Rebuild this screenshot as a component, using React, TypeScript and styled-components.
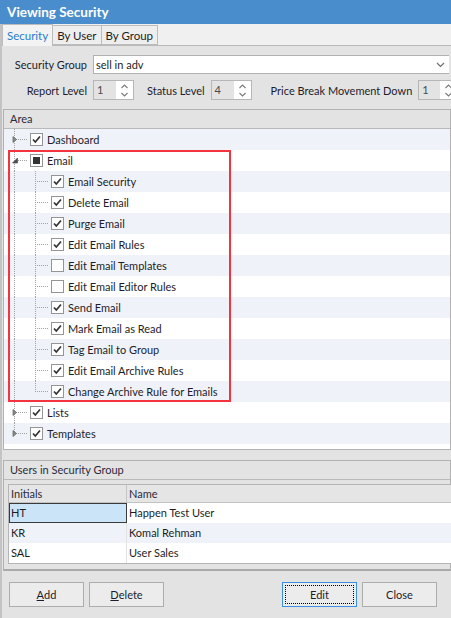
import React from "react";
import styled, { createGlobalStyle } from "styled-components";

const GlobalStyle = createGlobalStyle`
  html, body {
    margin: 0;
    padding: 0;
    background: #e3e3e3;
  }
  body {
    font-family: "Lato", "Liberation Sans", sans-serif;
    font-size: 11px;
    color: #1e1e1e;
  }
`;

type TreeItem = {
  label: string;
  level: 0 | 1;
  checked: boolean | "mixed";
  expander?: "closed" | "open";
  guides: Array<"pass" | "tee" | "end">;
};

const treeItems: TreeItem[] = [
  { label: "Dashboard", level: 0, checked: true, expander: "closed", guides: ["tee"] },
  { label: "Email", level: 0, checked: "mixed", expander: "open", guides: ["tee"] },
  { label: "Email Security", level: 1, checked: true, guides: ["pass", "tee"] },
  { label: "Delete Email", level: 1, checked: true, guides: ["pass", "tee"] },
  { label: "Purge Email", level: 1, checked: true, guides: ["pass", "tee"] },
  { label: "Edit Email Rules", level: 1, checked: true, guides: ["pass", "tee"] },
  { label: "Edit Email Templates", level: 1, checked: false, guides: ["pass", "tee"] },
  { label: "Edit Email Editor Rules", level: 1, checked: false, guides: ["pass", "tee"] },
  { label: "Send Email", level: 1, checked: true, guides: ["pass", "tee"] },
  { label: "Mark Email as Read", level: 1, checked: true, guides: ["pass", "tee"] },
  { label: "Tag Email to Group", level: 1, checked: true, guides: ["pass", "tee"] },
  { label: "Edit Email Archive Rules", level: 1, checked: true, guides: ["pass", "tee"] },
  { label: "Change Archive Rule for Emails", level: 1, checked: true, guides: ["pass", "end"] },
  { label: "Lists", level: 0, checked: true, expander: "closed", guides: ["tee"] },
  { label: "Templates", level: 0, checked: true, expander: "closed", guides: ["end"] },
];

const users = [
  { initials: "HT", name: "Happen Test User" },
  { initials: "KR", name: "Komal Rehman" },
  { initials: "SAL", name: "User Sales" },
];

function SpinArrows() {
  return (
    <SpinButtons>
      <svg width="7" height="5" viewBox="0 0 7 5">
        <path d="M0.5 4 L3.5 1 L6.5 4" fill="none" stroke="#7a7a7a" strokeWidth="1.1" />
      </svg>
      <svg width="7" height="5" viewBox="0 0 7 5">
        <path d="M0.5 1 L3.5 4 L6.5 1" fill="none" stroke="#7a7a7a" strokeWidth="1.1" />
      </svg>
    </SpinButtons>
  );
}

function Spinner({ value, width }: { value: string; width: number }) {
  return (
    <SpinBox $width={width}>
      <SpinValue>{value}</SpinValue>
      <SpinArrows />
    </SpinBox>
  );
}

function CheckBox({ state }: { state: boolean | "mixed" }) {
  return (
    <Check>
      {state === true && (
        <svg width="11" height="11" viewBox="0 0 11 11">
          <path d="M2 5.5 L4.3 8 L9 2.5" fill="none" stroke="#333" strokeWidth="1.7" />
        </svg>
      )}
      {state === "mixed" && <MixedMark />}
    </Check>
  );
}

function Expander({ kind }: { kind: "closed" | "open" }) {
  return (
    <ExpanderIcon width="8" height="9" viewBox="0 0 8 9">
      {kind === "closed" ? (
        <path d="M2 1.5 L5.5 4.5 L2 7.5 Z" fill="#8a8a8a" stroke="#6a6a6a" strokeWidth="0.8" />
      ) : (
        <path d="M6.5 2 L6.5 7 L1.5 7 Z" fill="#505050" stroke="#404040" strokeWidth="0.6" />
      )}
    </ExpanderIcon>
  );
}

export default function App() {
  return (
    <Window>
      <GlobalStyle />
      <TitleBar>Viewing Security</TitleBar>
      <Body>
        <TabStrip>
          <Tab $active>Security</Tab>
          <Tab>By User</Tab>
          <Tab>By Group</Tab>
        </TabStrip>

        <Form>
          <FieldRow>
            <Label $width={85}>Security Group</Label>
            <ComboBox>
              <span>sell in adv</span>
              <svg width="9" height="6" viewBox="0 0 9 6">
                <path d="M1 1 L4.5 4.5 L8 1" fill="none" stroke="#6d6d6d" strokeWidth="1.2" />
              </svg>
            </ComboBox>
          </FieldRow>
          <FieldRow>
            <Label $width={85}>Report Level</Label>
            <Spinner value="1" width={41} />
            <Label $gapLeft={13}>Status Level</Label>
            <Spinner value="4" width={41} />
            <Label $gapLeft={19}>Price Break Movement Down</Label>
            <Spinner value="1" width={40} />
          </FieldRow>
        </Form>

        <AreaPanel>
          <PanelHeader>Area</PanelHeader>
          <Tree>
            {treeItems.map((item, i) => (
              <TreeRow key={item.label + i} $alt={i % 2 === 0}>
                {item.guides.map((g, j) => (
                  <Guide key={j} $mode={g}>
                    {j === 0 && item.expander && <Expander kind={item.expander} />}
                  </Guide>
                ))}
                <CheckBox state={item.checked} />
                <TreeLabel>{item.label}</TreeLabel>
              </TreeRow>
            ))}
            <Highlight />
          </Tree>
        </AreaPanel>

        <UsersPanel>
          <PanelHeader>Users in Security Group</PanelHeader>
          <GridWrap>
            <Grid>
              <GridHead>
                <HeadCell $width={115}>Initials</HeadCell>
                <HeadCell>Name</HeadCell>
              </GridHead>
              {users.map((u, i) => (
                <GridRow key={u.initials} $alt={i % 2 === 1}>
                  <Cell $width={115} $selected={i === 0}>
                    {u.initials}
                  </Cell>
                  <Cell>{u.name}</Cell>
                </GridRow>
              ))}
            </Grid>
          </GridWrap>
        </UsersPanel>

        <ButtonBar>
          <ButtonGroup>
            <Button>
              <u>A</u>dd
            </Button>
            <Button>
              <u>D</u>elete
            </Button>
          </ButtonGroup>
          <ButtonGroup>
            <Button $focused>
              <FocusRect>Edit</FocusRect>
            </Button>
            <Button>Close</Button>
          </ButtonGroup>
        </ButtonBar>
      </Body>
    </Window>
  );
}

const Window = styled.div`
  width: 451px;
  height: 618px;
  overflow: hidden;
  display: flex;
  flex-direction: column;
  background: #e3e3e3;
`;

const TitleBar = styled.div`
  height: 24px;
  flex: none;
  background: #4a8dcc;
  color: #ffffff;
  font-weight: bold;
  font-size: 13.5px;
  line-height: 24px;
  padding-left: 7px;
`;

const Body = styled.div`
  flex: 1;
  display: flex;
  flex-direction: column;
  border-left: 2px solid #c3c3c3;
  min-height: 0;
`;

const TabStrip = styled.div`
  height: 22px;
  flex: none;
  box-sizing: border-box;
  display: flex;
  align-items: flex-end;
  background: #f0f0f0;
  border-bottom: 1px solid #b9b9b9;
`;

const Tab = styled.div<{ $active?: boolean }>`
  height: ${(p) => (p.$active ? 22 : 20)}px;
  box-sizing: border-box;
  padding: 0 4px;
  margin-bottom: ${(p) => (p.$active ? -1 : 0)}px;
  margin-left: ${(p) => (p.$active ? 0 : -1)}px;
  display: flex;
  align-items: center;
  border: 1px solid #bcbcbc;
  border-bottom: ${(p) => (p.$active ? "none" : "1px solid #bcbcbc")};
  background: ${(p) => (p.$active ? "#f3f3f3" : "#eeeeee")};
  color: ${(p) => (p.$active ? "#2a7dcf" : "#1e1e1e")};
  font-size: 11.5px;
  &:first-child {
    margin-left: 0;
  }
`;

const Form = styled.div`
  height: 63px;
  flex: none;
  box-sizing: border-box;
  padding-top: 8px;
  display: flex;
  flex-direction: column;
  gap: 6px;
`;

const FieldRow = styled.div`
  display: flex;
  align-items: center;
  height: 20px;
`;

const Label = styled.div<{ $width?: number; $gapLeft?: number }>`
  ${(p) => (p.$width ? `width: ${p.$width}px; text-align: right;` : "")}
  margin-left: ${(p) => p.$gapLeft ?? 0}px;
  margin-right: 6px;
  white-space: nowrap;
  flex: none;
  font-size: 11px;
  color: #1d1d2b;
`;

const ComboBox = styled.div`
  flex: none;
  width: 356px;
  height: 19px;
  box-sizing: border-box;
  background: #ffffff;
  border: 1px solid #b1b1b1;
  border-right: none;
  display: flex;
  align-items: center;
  justify-content: space-between;
  padding: 0 4px 0 2px;
  font-size: 11px;
  svg {
    margin-top: 1px;
  }
`;

const SpinBox = styled.div<{ $width: number }>`
  flex: none;
  width: ${(p) => p.$width}px;
  height: 20px;
  box-sizing: border-box;
  border: 1px solid #b6b6b6;
  background: #e3e3e3;
  display: flex;
`;

const SpinValue = styled.div`
  flex: 1;
  padding-left: 3px;
  line-height: 18px;
  color: #4a4a4a;
  font-size: 11px;
`;

const SpinButtons = styled.div`
  width: 17px;
  background: #ffffff;
  display: flex;
  flex-direction: column;
  align-items: center;
  justify-content: center;
  gap: 3px;
`;

const AreaPanel = styled.div`
  flex: none;
  height: 341px;
  box-sizing: border-box;
  margin-left: 1px;
  border: 1px solid #b2b2b2;
  display: flex;
  flex-direction: column;
`;

const PanelHeader = styled.div`
  height: 19px;
  flex: none;
  box-sizing: border-box;
  border-bottom: 1px solid #b9b9b9;
  padding-left: 6px;
  line-height: 18px;
  font-size: 11px;
  color: #2b2b3b;
`;

const Tree = styled.div`
  flex: 1;
  position: relative;
  background: #ffffff;
`;

const TreeRow = styled.div<{ $alt: boolean }>`
  height: 21px;
  display: flex;
  align-items: center;
  background: ${(p) => (p.$alt ? "#eff3f9" : "#ffffff")};
`;

const dotsV = "linear-gradient(to bottom, #a3a3a3 50%, transparent 50%)";
const dotsH = "linear-gradient(to right, #a3a3a3 50%, transparent 50%)";

const Guide = styled.div<{ $mode: "pass" | "tee" | "end" }>`
  position: relative;
  width: 21px;
  height: 100%;
  flex: none;
  &::before {
    content: "";
    position: absolute;
    left: 10px;
    top: 0;
    width: 1px;
    height: ${(p) => (p.$mode === "end" ? "11px" : "100%")};
    background-image: ${dotsV};
    background-size: 1px 2px;
  }
  &::after {
    content: "";
    display: ${(p) => (p.$mode === "pass" ? "none" : "block")};
    position: absolute;
    left: 12px;
    top: 10px;
    width: 12px;
    height: 1px;
    background-image: ${dotsH};
    background-size: 2px 1px;
  }
`;

const ExpanderIcon = styled.svg`
  position: absolute;
  left: 7px;
  top: 6px;
  z-index: 1;
`;

const Check = styled.div`
  width: 13px;
  height: 13px;
  box-sizing: border-box;
  flex: none;
  margin-left: 5px;
  border: 1px solid #959595;
  background: #ffffff;
  display: flex;
  align-items: center;
  justify-content: center;
`;

const MixedMark = styled.div`
  width: 7px;
  height: 7px;
  background: #333333;
`;

const TreeLabel = styled.span`
  margin-left: 4px;
  font-size: 11px;
  color: #1d1d2b;
  white-space: nowrap;
`;

const Highlight = styled.div`
  position: absolute;
  left: 4px;
  top: 21px;
  width: 223px;
  height: 252px;
  box-sizing: border-box;
  border: 2px solid #f5333f;
  pointer-events: none;
`;

const UsersPanel = styled.div`
  flex: none;
  margin-top: 10px;
  margin-left: 1px;
  height: 111px;
  box-sizing: border-box;
  border: 1px solid #b2b2b2;
  border-bottom: 2px solid #a9a9a9;
  display: flex;
  flex-direction: column;
`;

const GridWrap = styled.div`
  padding: 4px 0 0 4px;
`;

const Grid = styled.div`
  border: 1px solid #b5b5b5;
  border-right: none;
  background: #ffffff;
  width: 460px;
`;

const GridHead = styled.div`
  height: 18px;
  box-sizing: border-box;
  display: flex;
  background: #e5e5e5;
  border-bottom: 1px solid #c2c2c2;
`;

const HeadCell = styled.div<{ $width?: number }>`
  ${(p) => (p.$width ? `width: ${p.$width}px; border-right: 1px solid #c4c4c4;` : "flex: 1;")}
  padding-left: 2px;
  line-height: 17px;
  font-size: 11px;
  color: #2b2b3b;
`;

const GridRow = styled.div<{ $alt: boolean }>`
  height: 20px;
  display: flex;
  background: ${(p) => (p.$alt ? "#eff3f9" : "#ffffff")};
`;

const Cell = styled.div<{ $width?: number; $selected?: boolean }>`
  ${(p) => (p.$width ? `width: ${p.$width}px; border-right: 1px solid #e1e1e1;` : "flex: 1;")}
  padding-left: 2px;
  line-height: 20px;
  font-size: 11px;
  color: #1d1d1d;
  ${(p) =>
    p.$selected
      ? `background: #cce4f7; outline: 1px solid #3a3a3a; outline-offset: -1px;`
      : ""}
`;

const ButtonBar = styled.div`
  flex: none;
  display: flex;
  justify-content: space-between;
  padding: 11px 14px 0 7px;
`;

const ButtonGroup = styled.div`
  display: flex;
  gap: 5px;
`;

const Button = styled.div<{ $focused?: boolean }>`
  width: 75px;
  height: 25px;
  box-sizing: border-box;
  border: 1px solid ${(p) => (p.$focused ? "#3c8ee0" : "#adadad")};
  background: #ececec;
  display: flex;
  align-items: center;
  justify-content: center;
  font-size: 11px;
  color: #1d1d2b;
  padding: ${(p) => (p.$focused ? "2px" : "0")};
`;

const FocusRect = styled.div`
  flex: 1;
  align-self: stretch;
  border: 1px dotted #000000;
  display: flex;
  align-items: center;
  justify-content: center;
`;
